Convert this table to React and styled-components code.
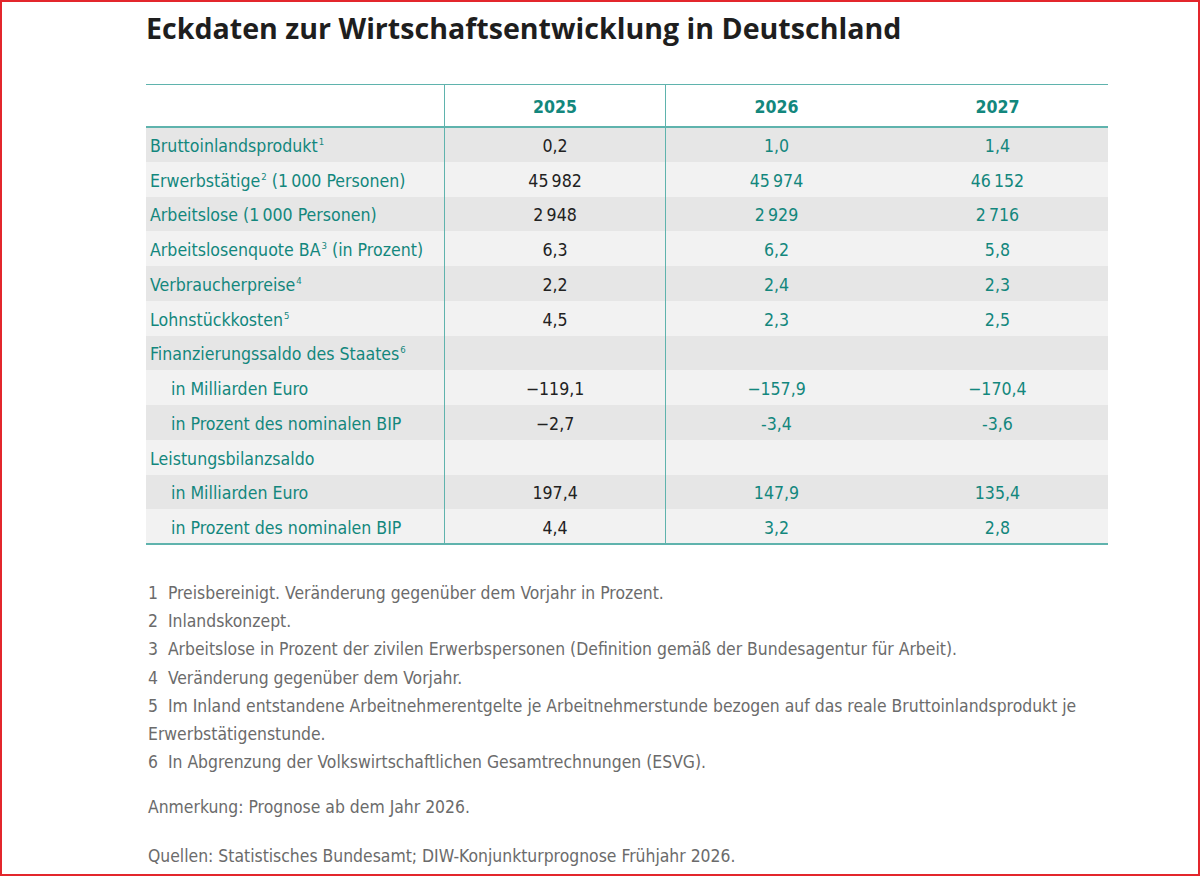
import React from 'react';
import styled, { createGlobalStyle } from 'styled-components';

const TEAL = '#13877d';
const LINE = '#5fb3ad';
const TEXT = '#222222';
const GREY = '#6b6b6b';
const THIN = '\u2009';

const GlobalStyle = createGlobalStyle`
  html, body {
    margin: 0;
    padding: 0;
    background: #ffffff;
  }
  body {
    height: 876px;
    box-sizing: border-box;
    border: 2px solid #e3262c;
    overflow: hidden;
    font-family: "DejaVu Sans Condensed", "Liberation Sans", sans-serif;
  }
`;

const rows = [
  { label: 'Bruttoinlandsprodukt', sup: '1', values: ['0,2', '1,0', '1,4'] },
  { label: 'Erwerbstätige', sup: '2', after: ` (1${THIN}000 Personen)`, values: [`45${THIN}982`, `45${THIN}974`, `46${THIN}152`] },
  { label: `Arbeitslose (1${THIN}000 Personen)`, values: [`2${THIN}948`, `2${THIN}929`, `2${THIN}716`] },
  { label: 'Arbeitslosenquote BA', sup: '3', after: ' (in Prozent)', values: ['6,3', '6,2', '5,8'] },
  { label: 'Verbraucherpreise', sup: '4', values: ['2,2', '2,4', '2,3'] },
  { label: 'Lohnstückkosten', sup: '5', values: ['4,5', '2,3', '2,5'] },
  { label: 'Finanzierungssaldo des Staates', sup: '6', values: ['', '', ''] },
  { label: 'in Milliarden Euro', indent: true, values: ['−119,1', '−157,9', '−170,4'] },
  { label: 'in Prozent des nominalen BIP', indent: true, values: ['−2,7', '-3,4', '-3,6'] },
  { label: 'Leistungsbilanzsaldo', values: ['', '', ''] },
  { label: 'in Milliarden Euro', indent: true, values: ['197,4', '147,9', '135,4'] },
  { label: 'in Prozent des nominalen BIP', indent: true, values: ['4,4', '3,2', '2,8'] },
];

const notes = [
  ['1', 'Preisbereinigt. Veränderung gegenüber dem Vorjahr in Prozent.'],
  ['2', 'Inlandskonzept.'],
  ['3', 'Arbeitslose in Prozent der zivilen Erwerbspersonen (Definition gemäß der Bundesagentur für Arbeit).'],
  ['4', 'Veränderung gegenüber dem Vorjahr.'],
  ['5', 'Im Inland entstandene Arbeitnehmerentgelte je Arbeitnehmerstunde bezogen auf das reale Bruttoinlandsprodukt je Erwerbstätigenstunde.'],
  ['6', 'In Abgrenzung der Volkswirtschaftlichen Gesamtrechnungen (ESVG).'],
];

function App() {
  return (
    <Page>
      <GlobalStyle />
      <Title>Eckdaten zur Wirtschaftsentwicklung in Deutschland</Title>

      <Table>
        <thead>
          <tr>
            <HeadCell $divider />
            <HeadCell $divider>2025</HeadCell>
            <HeadCell>2026</HeadCell>
            <HeadCell>2027</HeadCell>
          </tr>
        </thead>
        <tbody>
          {rows.map((row, i) => (
            <Row key={i} $dark={i % 2 === 0}>
              <Label $indent={row.indent}>
                {row.label}
                {row.sup && <Sup>{row.sup}</Sup>}
                {row.after}
              </Label>
              <Value $divider $dark>{row.values[0]}</Value>
              <Value>{row.values[1]}</Value>
              <Value>{row.values[2]}</Value>
            </Row>
          ))}
        </tbody>
      </Table>

      <Notes>
        {notes.map(([n, text]) => (
          <Note key={n}>
            {n}&nbsp;&nbsp;{text}
          </Note>
        ))}
      </Notes>

      <Remark $gap={17}>Anmerkung: Prognose ab dem Jahr 2026.</Remark>
      <Remark $gap={20}>Quellen: Statistisches Bundesamt; DIW-Konjunkturprognose Frühjahr 2026.</Remark>
    </Page>
  );
}

const Page = styled.div`
  width: 962px;
  margin-left: 144px;
  padding-top: 8px;
`;

const Title = styled.h1`
  margin: 0 0 38px 0;
  font-family: "Open Sans", "Noto Sans", sans-serif;
  font-weight: 700;
  font-size: 28.6px;
  line-height: 36px;
  color: #1e1e1e;
`;

const Table = styled.table`
  width: 962px;
  border-collapse: collapse;
  table-layout: fixed;
  border-top: 1px solid ${LINE};
  border-bottom: 2px solid ${LINE};
  font-size: 17.6px;
`;

const HeadCell = styled.th`
  height: 39px;
  padding: 2px 0 0 0;
  font-weight: 700;
  color: ${TEAL};
  text-align: center;
  border-bottom: 2px solid ${LINE};
  border-right: ${p => (p.$divider ? `1px solid ${LINE}` : 'none')};
  &:first-child {
    width: 298px;
  }
`;

const Row = styled.tr`
  height: 34.75px;
  background: ${p => (p.$dark ? '#e6e6e6' : '#f2f2f2')};
`;

const Label = styled.td`
  padding: 3px 0 0 ${p => (p.$indent ? '25px' : '4px')};
  color: ${TEAL};
  white-space: nowrap;
  border-right: 1px solid ${LINE};
`;

const Sup = styled.sup`
  font-size: 9.5px;
  line-height: 0;
  vertical-align: 7px;
  margin-left: 1px;
`;

const Value = styled.td`
  padding: 3px 0 0 0;
  text-align: center;
  color: ${p => (p.$dark ? TEXT : TEAL)};
  border-right: ${p => (p.$divider ? `1px solid ${LINE}` : 'none')};
`;

const Notes = styled.div`
  margin-top: 34px;
  padding-left: 2px;
  width: 940px;
`;

const Note = styled.p`
  margin: 0;
  font-size: 17.4px;
  line-height: 28.2px;
  color: ${GREY};
`;

const Remark = styled.p`
  margin: ${p => p.$gap}px 0 0 2px;
  font-size: 17.4px;
  line-height: 28.2px;
  color: ${GREY};
`;

export default App;
